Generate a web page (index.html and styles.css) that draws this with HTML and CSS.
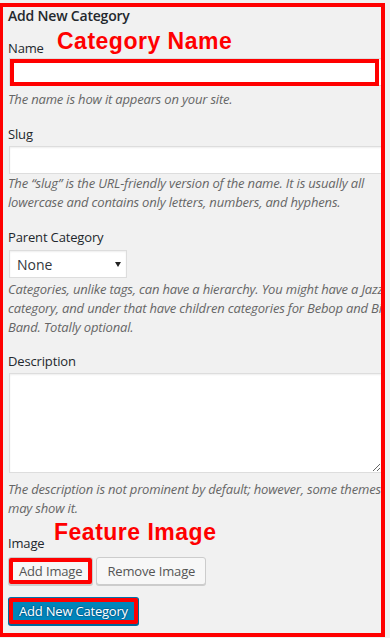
FILE: index.html
```html
<!DOCTYPE html>
<html lang="en">
<head>
<meta charset="utf-8">
<title>Add New Category</title>
<link rel="stylesheet" href="styles.css">
</head>
<body>
<div class="frame">
  <form class="form">
    <h2 class="title">Add New Category</h2>

    <div class="field field-name">
      <label class="label" for="tag-name">Name</label>
      <span class="note note-name">Category Name</span>
      <div class="marked">
        <input class="input" id="tag-name" type="text">
        <span class="mark"></span>
      </div>
      <p class="help help-name">The name is how it appears on your site.</p>
    </div>

    <div class="field field-slug">
      <label class="label" for="tag-slug">Slug</label>
      <input class="input input-slug" id="tag-slug" type="text">
      <p class="help">The “slug” is the URL-friendly version of the name. It is usually all lowercase and contains only letters, numbers, and hyphens.</p>
    </div>

    <div class="field field-parent">
      <label class="label" for="parent">Parent Category</label>
      <div class="select-wrap">
        <select class="select" id="parent"><option>None</option></select>
      </div>
      <p class="help help-parent">Categories, unlike tags, can have a hierarchy. You might have a Jazz category, and under that have children categories for Bebop and Big Band. Totally optional.</p>
    </div>

    <div class="field field-desc">
      <label class="label" for="tag-description">Description</label>
      <textarea class="textarea" id="tag-description"></textarea>
      <p class="help help-desc">The description is not prominent by default; however, some themes may show it.</p>
    </div>

    <div class="field field-image">
      <label class="label">Image</label>
      <span class="note note-image">Feature Image</span>
      <div class="actions">
        <button type="button" class="btn btn-marked">Add Image</button>
        <button type="button" class="btn">Remove Image</button>
      </div>
    </div>

    <div class="submit">
      <button type="button" class="btn btn-primary">Add New Category</button>
    </div>
  </form>
</div>
</body>
</html>
```

FILE: styles.css
```css
html, body {
  margin: 0;
  padding: 0;
  background: #f1f1f1;
}

body {
  font-family: "Open Sans", "Noto Sans", sans-serif;
  font-size: 13px;
  color: #23282d;
  overflow: hidden;
}

.frame {
  box-sizing: border-box;
  width: 386px;
  height: 634px;
  margin: 3px 0 0 -1px;
  padding: 0 0 0 5px;
  border: 4px solid #ff0000;
  overflow: hidden;
}

.form {
  width: 400px;
  margin: 0;
}

.title {
  margin: 0;
  font-size: 14px;
  font-weight: 600;
  line-height: 17px;
  letter-spacing: -0.2px;
  color: #23282d;
}

.field {
  position: relative;
}

.field-name { margin-top: 15px; }
.field-slug { margin-top: 16px; }
.field-parent { margin-top: 16px; }
.field-desc { margin-top: 15px; }
.field-image { margin-top: 16px; }

.label {
  display: block;
  font-size: 13px;
  line-height: 19px;
  letter-spacing: -0.15px;
  color: #23282d;
}

.note {
  position: absolute;
  font-family: "Liberation Sans", Arial, sans-serif;
  font-weight: 700;
  font-size: 23px;
  line-height: 23px;
  letter-spacing: 0.5px;
  color: #ff0000;
  white-space: nowrap;
}

.note-name { left: 49px; top: -9px; }
.note-image { left: 46px; top: -13px; }

.marked {
  position: relative;
}

.mark {
  position: absolute;
  left: 2px;
  top: 1px;
  width: 369px;
  height: 27px;
  box-sizing: border-box;
  border: 4px solid #ff0000;
}

.input {
  display: block;
  box-sizing: border-box;
  width: 400px;
  height: 28px;
  margin: 0 0 0 1px;
  padding: 3px 5px;
  border: 1px solid #ddd;
  border-radius: 0;
  background: #fff;
  box-shadow: inset 0 1px 2px rgba(0, 0, 0, 0.07);
  font: inherit;
  color: #32373c;
  outline: none;
}

.input-slug { margin-top: 2px; }

.help {
  margin: 0;
  width: 400px;
  font-size: 13px;
  font-style: italic;
  line-height: 19px;
  letter-spacing: -0.17px;
  color: #666;
}

.help-name { margin-top: 4px; }
.help-parent { margin-top: 2px; }
.help-desc { margin-top: 7px; }

.select-wrap {
  position: relative;
  width: 119px;
  margin-top: 3px;
}

.select-wrap::after {
  content: "";
  position: absolute;
  left: 107px;
  top: 12px;
  width: 0;
  height: 0;
  border-left: 3px solid transparent;
  border-right: 3px solid transparent;
  border-top: 5px solid #222;
  pointer-events: none;
}

.select {
  display: block;
  box-sizing: border-box;
  width: 118px;
  height: 28px;
  margin: 0 0 0 1px;
  padding: 0 20px 0 7px;
  border: 1px solid #ddd;
  border-radius: 0;
  background: #fff;
  box-shadow: inset 0 1px 2px rgba(0, 0, 0, 0.07);
  -webkit-appearance: none;
  appearance: none;
  font-family: inherit;
  font-size: 14px;
  color: #32373c;
  outline: none;
}

.textarea {
  display: block;
  box-sizing: border-box;
  width: 373px;
  height: 100px;
  margin: 2px 0 0 1px;
  padding: 2px 6px;
  border: 1px solid #ddd;
  border-radius: 0;
  background: #fff;
  box-shadow: inset 0 1px 2px rgba(0, 0, 0, 0.07);
  font: inherit;
  resize: both;
  outline: none;
}

.actions {
  display: flex;
  gap: 3px;
  margin-top: 4px;
}

.btn {
  box-sizing: border-box;
  height: 28px;
  margin: 0;
  padding: 0 10px 1px;
  border: 1px solid #ccc;
  border-radius: 3px;
  background: #f7f7f7;
  box-shadow: 0 1px 0 #ccc;
  font-family: inherit;
  font-size: 13px;
  line-height: 26px;
  letter-spacing: -0.15px;
  color: #555;
  white-space: nowrap;
  cursor: pointer;
}

.btn-marked {
  outline: 4px solid #ff0000;
  outline-offset: -5px;
}

.submit {
  margin-top: 12px;
}

.btn-primary {
  background: #0085ba;
  border-color: #0073aa #006799 #006799;
  box-shadow: 0 1px 0 #006799;
  color: #fff;
  letter-spacing: -0.2px;
  text-shadow: 0 -1px 1px #006799, 1px 0 1px #006799, 0 1px 1px #006799, -1px 0 1px #006799;
  outline: 4px solid #ff0000;
  outline-offset: -5px;
}
```
